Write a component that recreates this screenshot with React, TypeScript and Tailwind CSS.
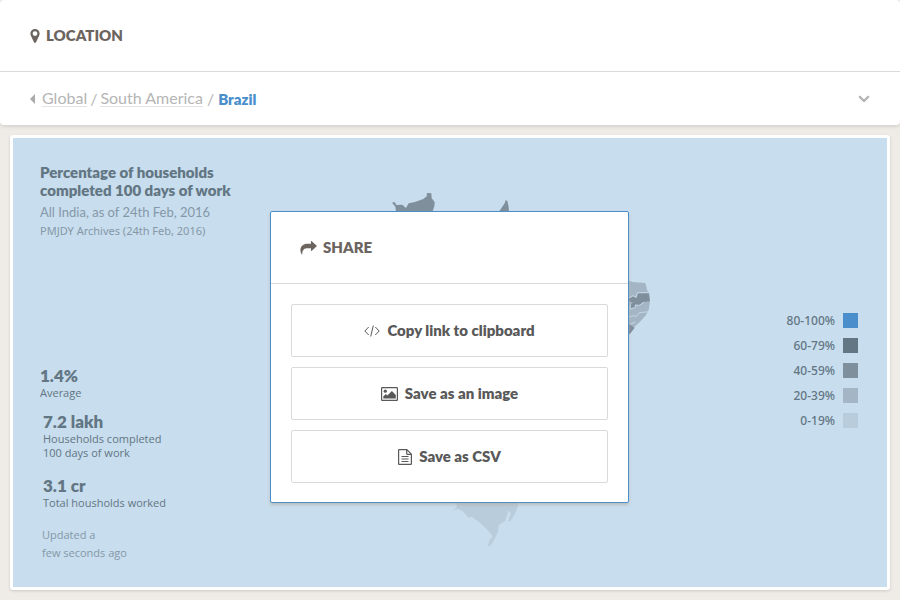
import React from "react";

const legend = [
  { label: "80-100%", swatch: "bg-[#4a8fcc]" },
  { label: "60-79%", swatch: "bg-[#627684]" },
  { label: "40-59%", swatch: "bg-[#808f9c]" },
  { label: "20-39%", swatch: "bg-[#a4b6c5]" },
  { label: "0-19%", swatch: "bg-[#b9ccdc]" },
];

function PinIcon() {
  return (
    <svg aria-hidden="true" className="h-[14px] w-[10px] shrink-0" viewBox="0 0 10 14" fill="currentColor">
      <path
        fillRule="evenodd"
        d="M5 0a4.600 4.600 0 0 1 4.600 4.600c0 .8-.2 1.500-.5 2.100L6 13.300c-.4.8-1.600.8-2 0L.9 6.700C.6 6.100.4 5.400.4 4.600A4.600 4.600 0 0 1 5 0Zm0 2.200a2.400 2.400 0 1 0 0 4.800 2.400 2.400 0 0 0 0-4.800Z"
      />
    </svg>
  );
}

function ShareIcon() {
  return (
    <svg aria-hidden="true" className="h-[14px] w-[17px] shrink-0" viewBox="0 0 17 14" fill="currentColor">
      <path d="M11 .3c0-.3.3-.4.5-.2l5 4.500c.3.300.3.600 0 .900l-5 4.500c-.2.200-.5.100-.5-.200V7.300H8C4.300 7.300 2.200 8.500 2.300 13.300c0 .3-.3.400-.5.100C.8 12 .3 10.500.4 8.800.7 4.500 4 2.800 8 2.800h3Z" />
    </svg>
  );
}

function CodeIcon() {
  return (
    <svg aria-hidden="true" className="h-[12px] w-[16px] shrink-0" viewBox="0 0 16 12" fill="none" stroke="currentColor">
      <path d="M4.700 2 .8 6l3.900 4M11.300 2l3.900 4-3.900 4M9.300.5 6.700 11.500" />
    </svg>
  );
}

function PictureIcon() {
  return (
    <svg aria-hidden="true" className="h-[14px] w-[17px] shrink-0" viewBox="0 0 17 14" fill="currentColor">
      <path fillRule="evenodd" d="M1.300 0h14.400C16.400 0 17 .6 17 1.300v11.400c0 .7-.6 1.300-1.300 1.300H1.300C.6 14 0 13.400 0 12.700V1.300C0 .6.6 0 1.300 0Zm.2 1.200a.3.3 0 0 0-.3.300v11c0 .2.100.3.300.3h14c.2 0 .3-.1.3-.3v-11a.3.3 0 0 0-.3-.3Z" />
      <circle cx="4.300" cy="4.200" r="1.600" />
      <path d="M2.300 11.600V9.500l2.500-2.500 1.600 1.500 4.500-4.500 3.900 4v3.600Z" />
    </svg>
  );
}

function FileIcon() {
  return (
    <svg aria-hidden="true" className="h-[16px] w-[14px] shrink-0" viewBox="0 0 14 16" fill="none" stroke="currentColor" strokeWidth="1.200">
      <path d="M1.200.6h7.600l4.600 4.600v9.600c0 .3-.3.600-.6.600H1.200a.6.6 0 0 1-.6-.6V1.200c0-.3.3-.6.6-.6ZM8.700.8v4c0 .3.200.5.5.5h4M3.500 7.500h7M3.500 10h7M3.500 12.500h7" />
    </svg>
  );
}

function RegionMap() {
  return (
    <svg aria-hidden="true" className="h-[380px] w-[420px] shrink-0" viewBox="240 180 420 380">
      <g transform="translate(370 180) scale(.33333)" fill="#808f9c">
        <path d="M66 68l8-2 5 9 18-1 11 10 8-14 19-4 25-9 10-8 1-10 13 1 1 15 9 11-1 13-5 15-2 20H78V94l-2-14Z" />
        <path d="M386 96l10-14 8-12 3-9 5 1 1 6 3 12 1 22h-31Z" />
      </g>
      <g transform="translate(600 260) scale(.33333)">
        <path fill="#a4b6c5" d="M70 62h16l12 4 38 3 6 23 6 8 2 24-4 26-8 15-18 20-16 15-14 22-20 8Z" />
        <path fill="#808f9c" d="M80 112l10 2 10-5 10 5 4-14 32 0 4 24-20 2-12 9-12-1v8l-14 3v-11l7-7-19-4Z" />
        <path fill="#808f9c" d="M70 190l16 2 18 11-14 18-20 8Z" />
        <path fill="none" stroke="#c8dded" strokeWidth="2.500" d="M80 111l10 2 9-6 9 5 4-14 34 0M132 127l-14 9-12-1v8l-15 4v-13M84 172l16-5 8 3 10-12 28-3M92 192l14-6" />
      </g>
      <g transform="translate(430 490) scale(.33333)">
        <path fill="#b9ccdc" d="M68 62l12-10V30h184v18l-8 22-16 25-5-3 8-22-8-8-9 30-20 13-2 20-12 25-12 18h-6l6-20 8-8-10-15-28-27-25-18-9 4-16-19-15-9Z" />
      </g>
    </svg>
  );
}

function ShareAction({ icon, children }: { icon: React.ReactNode; children: React.ReactNode }) {
  return (
    <button
      type="button"
      className="flex h-[53px] w-full items-center justify-center gap-[7px] rounded-xs border border-[#dadada] bg-white text-[15px] font-extrabold text-[#595959]"
    >
      {icon}
      {children}
    </button>
  );
}

export default function App() {
  return (
    <div className="flex min-h-screen flex-col bg-[#efebe7] font-[Lato,'Noto_Sans',sans-serif]">
      <header className="rounded-[4px] bg-white shadow-[0_1px_4px_rgba(0,0,0,0.15)]">
        <div className="flex h-[72px] items-center gap-[6px] border-b border-[#dadada] px-[30px] text-[#6c655f]">
          <PinIcon />
          <h1 className="text-[15px] font-extrabold">LOCATION</h1>
        </div>
        <div className="flex h-[53px] items-center justify-between px-[30px]">
          <nav aria-label="Breadcrumb" className="flex items-center text-[16px] leading-4 text-[#b5b5b5]">
            <svg aria-hidden="true" className="mr-[7px] h-[10px] w-[5px]" viewBox="0 0 5 10" fill="#aaaaaa">
              <path d="M5 0v10L0 5Z" />
            </svg>
            <a href="#global" className="border-b border-[#e4e4e4]">Global</a>
            <span className="mx-[3px]">/</span>
            <a href="#south-america" className="border-b border-[#e4e4e4]">South America</a>
            <span className="mx-1">/</span>
            <a href="#brazil" aria-current="page" className="text-[15px] font-extrabold text-[#4a8fcc]">Brazil</a>
          </nav>
          <button type="button" aria-label="Show locations" className="text-[#b0b0b0]">
            <svg aria-hidden="true" className="h-[8px] w-[12px]" viewBox="0 0 12 8" fill="none" stroke="currentColor" strokeWidth="2.200">
              <path d="M1.200 1.200 6 6l4.800-4.800" />
            </svg>
          </button>
        </div>
      </header>

      <main className="relative m-[10px] flex flex-1 justify-between rounded-[3px] border-3 border-white bg-[#c8dded] text-[#627684] shadow-[0_1px_3px_rgba(0,0,0,0.15)]">
        <section className="py-[25px] pl-[27px]">
          <h2 className="text-[15px] leading-[18px] font-extrabold">
            Percentage of households
            <br />
            completed 100 days of work
          </h2>
          <p className="mt-1 text-[13px] leading-[18px] text-[#8598a8]">All India, as of 24th Feb, 2016</p>
          <p className="font-['Noto_Sans',sans-serif] text-[11px] leading-[20px] text-[#8598a8]">PMJDY Archives (24th Feb, 2016)</p>
          <dl className="mt-[125px] text-[11px] leading-[14px] font-medium">
            <dt className="text-[17px] leading-[20px] font-extrabold">1.4%</dt>
            <dd className="font-['Open_Sans',sans-serif]">Average</dd>
            <div className="pl-[3px]">
              <dt className="mt-3 text-[17px] leading-[20px] font-extrabold">7.2 lakh</dt>
              <dd className="font-['Open_Sans',sans-serif]">
                Households completed
                <br />
                100 days of work
              </dd>
              <dt className="mt-4 text-[17px] leading-[20px] font-extrabold">3.1 cr</dt>
              <dd className="font-['Open_Sans',sans-serif]">Total housholds worked</dd>
            </div>
          </dl>
          <p className="mt-4 pl-[2px] font-['Open_Sans',sans-serif] text-[11px] leading-[18px] text-[#8598a8]">
            Updated a
            <br />
            few seconds ago
          </p>
        </section>

        <div className="absolute inset-0 flex items-start justify-center pt-[42px]">
          <RegionMap />
        </div>

        <ul className="mt-[170px] mr-[29px] font-['Noto_Sans',sans-serif] text-[12px] font-medium">
          {legend.map((item) => (
            <li key={item.label} className="flex h-[25px] items-center justify-end gap-2">
              {item.label}
              <span className={`size-[15px] ${item.swatch}`} />
            </li>
          ))}
        </ul>

        <div className="absolute inset-0 flex items-start justify-center pt-[73px] pr-[1px]">
          <section
            role="dialog"
            aria-labelledby="share-title"
            className="w-[359px] rounded-xs border border-[#4a8fcc] bg-white shadow-[0_2px_3px_rgba(180,170,160,0.6)]"
          >
            <div className="flex h-[72px] items-center gap-[6px] border-b border-[#dadada] px-[29px] text-[#6c655f]">
              <ShareIcon />
              <h2 id="share-title" className="text-[15px] font-extrabold">SHARE</h2>
            </div>
            <div className="flex flex-col gap-[10px] px-[20px] pt-[20px] pb-[19px]">
              <ShareAction icon={<CodeIcon />}>Copy link to clipboard</ShareAction>
              <ShareAction icon={<PictureIcon />}>Save as an image</ShareAction>
              <ShareAction icon={<FileIcon />}>Save as CSV</ShareAction>
            </div>
          </section>
        </div>
      </main>
    </div>
  );
}
